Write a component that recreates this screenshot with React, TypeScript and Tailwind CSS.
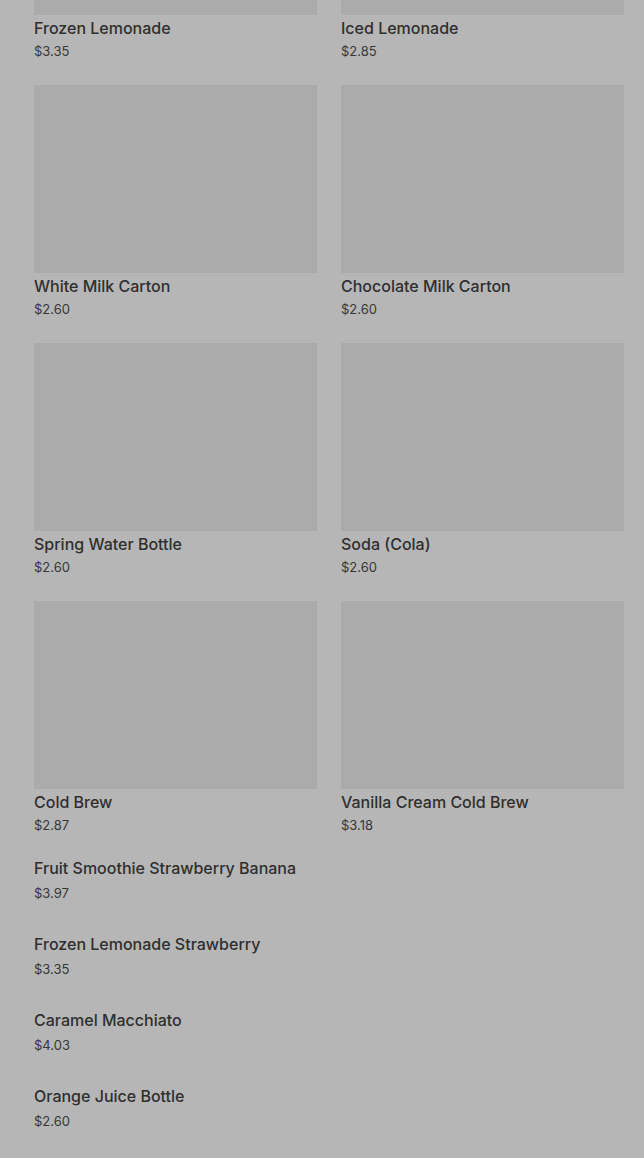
import React from "react";

type Item = { name: string; price: string };

const withImages: Item[] = [
  { name: "Frozen Lemonade", price: "$3.35" },
  { name: "Iced Lemonade", price: "$2.85" },
  { name: "White Milk Carton", price: "$2.60" },
  { name: "Chocolate Milk Carton", price: "$2.60" },
  { name: "Spring Water Bottle", price: "$2.60" },
  { name: "Soda (Cola)", price: "$2.60" },
  { name: "Cold Brew", price: "$2.87" },
  { name: "Vanilla Cream Cold Brew", price: "$3.18" },
];

const textOnly: Item[] = [
  { name: "Fruit Smoothie Strawberry Banana", price: "$3.97" },
  { name: "Frozen Lemonade Strawberry", price: "$3.35" },
  { name: "Caramel Macchiato", price: "$4.03" },
  { name: "Orange Juice Bottle", price: "$2.60" },
];

const font = { fontFamily: "Inter, 'Noto Sans', sans-serif" };

export default function App() {
  return (
    <div className="h-[1158px] w-full overflow-hidden bg-[#b6b6b6]" style={font}>
      <div className="mt-[-173px] pl-[34px] pr-[20px]">
        <div className="grid grid-cols-2 gap-x-[24px] gap-y-[23px]">
          {withImages.map((it) => (
            <div key={it.name} className="flex flex-col">
              <div className="h-[188px] w-full bg-[#ababab]" />
              <div className="mt-[1px] text-[16px] leading-[24px] font-medium text-[#2f2f2f]">{it.name}</div>
              <div className="text-[13px] leading-[22px] text-[#383838]">{it.price}</div>
            </div>
          ))}
        </div>
        <div className="mt-[20px] flex flex-col gap-[28px]">
          {textOnly.map((it) => (
            <div key={it.name} className="flex flex-col">
              <div className="text-[16px] leading-[24px] font-medium text-[#2f2f2f]">{it.name}</div>
              <div className="mt-[2px] text-[13px] leading-[22px] text-[#383838]">{it.price}</div>
            </div>
          ))}
        </div>
      </div>
    </div>
  );
}
